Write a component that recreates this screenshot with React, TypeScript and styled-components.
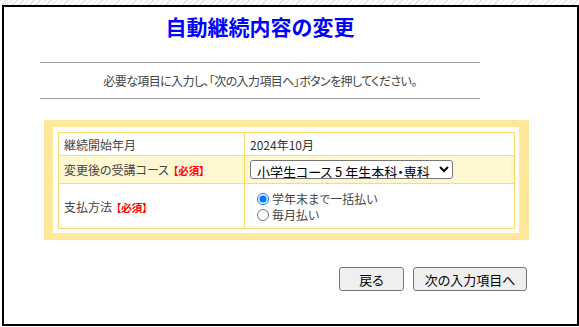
import React from "react";
import styled, { createGlobalStyle } from "styled-components";

const Global = createGlobalStyle`
  html, body { margin: 0; padding: 0; background: #fff; }
  body { font-family: "Noto Sans CJK JP", "Noto Sans", sans-serif; color: #333; }
  * { box-sizing: border-box; }
`;

const TopStrip = styled.div`
  height: 5px;
  background: repeating-linear-gradient(135deg, #e2e2e2 0 1px, #fff 1px 4px);
`;

const Frame = styled.div`
  margin-left: 2px;
  width: 577px;
  height: 321px;
  border: 2px solid #000;
  background: #fff;
`;

const Title = styled.h1`
  margin: 4px 0 0 36px;
  width: 440px;
  height: 30px;
  line-height: 30px;
  text-align: center;
  font-size: 21px;
  font-weight: bold;
  color: #0000ff;
`;

const Notice = styled.p`
  margin: 21px 0 0 36px;
  width: 440px;
  height: 37px;
  border-top: 1px solid #a0a0a0;
  border-bottom: 1px solid #a0a0a0;
  display: flex;
  align-items: center;
  justify-content: center;
  font-size: 12px;
  letter-spacing: -0.6px;
  font-feature-settings: "palt";
  color: #444;
`;

const FormBox = styled.div`
  margin: 21px 0 0 40px;
  width: 485px;
  border-style: solid;
  border-color: #ffe898;
  border-width: 7px 10px 7px 9px;
  padding: 5px 4px 4px 5px;
  background: #fff;
`;

const Table = styled.table`
  width: 100%;
  border-collapse: collapse;
  border: 1px solid #fbdc6a;
  font-size: 12px;
  font-feature-settings: "palt";
`;

const Row = styled.tr<{ $tone?: "hl" }>`
  background: ${(p) => (p.$tone === "hl" ? "#fff7cf" : "#fff")};
`;

const Label = styled.th<{ $h: number }>`
  width: 186px;
  height: ${(p) => p.$h}px;
  padding: 0 0 0 5px;
  border: 1px solid #fbdc6a;
  text-align: left;
  font-weight: normal;
  color: #444;
`;

const Cell = styled.td`
  padding: 0 0 0 5px;
  border: 1px solid #fbdc6a;
  color: #333;
`;

const Required = styled.span`
  margin-left: 4px;
  font-size: 10.5px;
  font-weight: bold;
  color: #ff0000;
`;

const CourseSelect = styled.select`
  width: 203px;
  height: 19px;
  font-family: "Noto Sans CJK JP", sans-serif;
  font-size: 13px;
  font-feature-settings: "palt";
  color: #000;
  border: 1px solid #767676;
  border-radius: 3px;
  background: #fff;
  padding: 0 0 0 2px;
`;

const RadioList = styled.div`
  display: flex;
  flex-direction: column;
  padding-left: 5px;
`;

const RadioLine = styled.label`
  display: flex;
  align-items: center;
  height: 16px;
  font-size: 12px;
  color: #444;
  input {
    margin: 2px 3px 0 2px;
    width: 12px;
    height: 12px;
  }
`;

const ButtonRow = styled.div`
  display: flex;
  justify-content: flex-end;
  gap: 9px;
  margin-top: 27px;
  padding-right: 50px;
`;

const Btn = styled.button<{ $w: number }>`
  width: ${(p) => p.$w}px;
  height: 24px;
  padding: 0;
  font-family: "Noto Sans CJK JP", sans-serif;
  font-size: 13px;
  font-feature-settings: "palt";
  color: #000;
  background: #efefef;
  border: 1px solid #767676;
  border-radius: 3px;
`;

export default function App() {
  return (
    <>
      <Global />
      <TopStrip />
      <Frame>
        <Title>自動継続内容の変更</Title>
        <Notice>必要な項目に入力し、「次の入力項目へ」ボタンを押してください。</Notice>
        <FormBox>
          <Table>
            <tbody>
              <Row>
                <Label $h={23}>継続開始年月</Label>
                <Cell>2024年10月</Cell>
              </Row>
              <Row $tone="hl">
                <Label $h={28}>
                  変更後の受講コース<Required>【必須】</Required>
                </Label>
                <Cell>
                  <CourseSelect defaultValue="a">
                    <option value="a">小学生コース 5 年生本科・専科</option>
                  </CourseSelect>
                </Cell>
              </Row>
              <Row>
                <Label $h={45}>
                  支払方法<Required>【必須】</Required>
                </Label>
                <Cell>
                  <RadioList>
                    <RadioLine>
                      <input type="radio" name="pay" defaultChecked />
                      学年末まで一括払い
                    </RadioLine>
                    <RadioLine>
                      <input type="radio" name="pay" />
                      毎月払い
                    </RadioLine>
                  </RadioList>
                </Cell>
              </Row>
            </tbody>
          </Table>
        </FormBox>
        <ButtonRow>
          <Btn $w={65}>戻る</Btn>
          <Btn $w={114}>次の入力項目へ</Btn>
        </ButtonRow>
      </Frame>
    </>
  );
}
